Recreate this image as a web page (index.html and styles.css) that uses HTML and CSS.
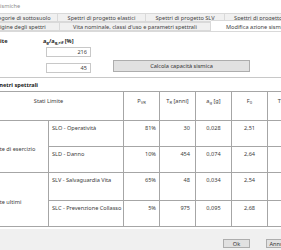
FILE: index.html
```html
<!DOCTYPE html>
<html lang="it">
<head>
  <meta charset="UTF-8" />
  <title>Azioni sismiche</title>
  <link rel="stylesheet" href="styles.css">
</head>
<body>
  <div class="window">
    <div class="titlebar">Azioni sismiche</div>

    <div class="tabs">
      <div class="tab-row row-top">
        <div class="tab w75">Categorie di sottosuolo</div>
        <div class="tab w88">Spettri di progetto elastici</div>
        <div class="tab w79">Spettri di progetto SLV</div>
        <div class="tab w79">Spettri di progetto SLD</div>
      </div>
      <div class="tab-row row-bottom">
        <div class="tab w80">Origine degli spettri</div>
        <div class="tab w151">Vita nominale, classi d'uso e parametri spettrali</div>
        <div class="tab w93 active">Modifica azione sismica</div>
      </div>
    </div>

    <div class="page">
      <div class="form">
        <div class="label">Stato limite</div>
        <div class="label">a<sub>g</sub>/a<sub>g,rif</sub> [%]</div>
        <div></div>
        <div></div>
        <input class="field" type="text" value="216">
        <div></div>
        <div></div>
        <input class="field" type="text" value="45">
        <button class="btn btn-calc">Calcola capacità sismica</button>
      </div>

      <div class="section-title">Parametri spettrali</div>

      <table class="grid">
        <thead>
          <tr>
            <th class="c-group" colspan="2">Stati Limite</th>
            <th class="c-num">P<sub>VR</sub></th>
            <th class="c-num">T<sub>R</sub> [anni]</th>
            <th class="c-num">a<sub>g</sub> [g]</th>
            <th class="c-num">F<sub>0</sub></th>
            <th class="c-last">T*<sub>C</sub> [s]</th>
          </tr>
        </thead>
        <tbody>
          <tr>
            <td class="group" rowspan="2">Stati limite di esercizio</td>
            <td class="state">SLO - Operatività</td>
            <td class="pvr">81%</td>
            <td class="tr">30</td>
            <td class="mid">0,028</td>
            <td class="mid">2,51</td>
            <td class="last">0,174</td>
          </tr>
          <tr>
            <td class="state">SLD - Danno</td>
            <td class="pvr">10%</td>
            <td class="tr">454</td>
            <td class="mid">0,074</td>
            <td class="mid">2,64</td>
            <td class="last">0,285</td>
          </tr>
          <tr class="r-slv">
            <td class="group" rowspan="2">Stati limite ultimi</td>
            <td class="state">SLV - Salvaguardia Vita</td>
            <td class="pvr">65%</td>
            <td class="tr">48</td>
            <td class="mid">0,034</td>
            <td class="mid">2,54</td>
            <td class="last">0,199</td>
          </tr>
          <tr>
            <td class="state">SLC - Prevenzione Collasso</td>
            <td class="pvr">5%</td>
            <td class="tr">975</td>
            <td class="mid">0,095</td>
            <td class="mid">2,68</td>
            <td class="last">0,302</td>
          </tr>
        </tbody>
      </table>
    </div>

    <div class="footer">
      <button class="btn btn-foot">Ok</button>
      <button class="btn btn-foot">Annulla</button>
    </div>
  </div>
</body>
</html>
```

FILE: styles.css
```css
body {
  margin: 0;
  font-family: 'Noto Sans', sans-serif;
  font-size: 5.6px;
  color: #3c3c3c;
  background: #f0f0f0;
  overflow: hidden;
}
sub {
  font-size: 0.75em;
  vertical-align: -0.2em;
  line-height: 0;
}
.window {
  width: 340px;
  margin-left: -30px;
}
.titlebar {
  height: 13px;
  line-height: 13px;
  padding-left: 10px;
  background: #fff;
  color: #8c8c8c;
}

/* schede */
.tabs {
  background: #fff;
}
.tab-row {
  display: flex;
  height: 9px;
}
.row-top {
  padding-left: 13px;
}
.row-bottom {
  padding-left: 10px;
}
.tab {
  box-sizing: border-box;
  flex: none;
  height: 9px;
  line-height: 8px;
  text-align: center;
  white-space: nowrap;
  overflow: hidden;
  background: #f0f0f0;
  border: 1px solid #d9d9d9;
  border-left: none;
  color: #444;
}
.tab.active {
  position: relative;
  z-index: 1;
  height: 11px;
  margin-top: -2px;
  line-height: 12px;
  background: #fff;
  border-bottom: none;
}
.w75 { width: 75px; }
.w79 { width: 79px; }
.w80 { width: 80px; }
.w88 { width: 88px; }
.w93 { width: 93px; }
.w151 { width: 151px; }

/* pagina */
.page {
  background: #fff;
  border-top: 1px solid #d9d9d9;
  padding-bottom: 2px;
}
.form {
  display: grid;
  grid-template-columns: 73px 48px 1fr;
  grid-template-rows: 6px 10px 12px;
  row-gap: 3px;
  align-items: center;
  padding: 6px 0 5px 0;
}
.form .label {
  font-weight: 700;
  white-space: nowrap;
  color: #222;
}
.form .label:first-child {
  padding-left: 5px;
}
.field {
  box-sizing: border-box;
  width: 45px;
  height: 10px;
  margin-left: 3px;
  padding: 0 3px;
  border: 1px solid #c8c8c8;
  font: inherit;
  color: #3c3c3c;
  text-align: right;
  background: #fff;
}
.form .field:nth-of-type(2) {
  margin-top: 3px;
}
.btn {
  box-sizing: border-box;
  font: inherit;
  color: #333;
  background: #e1e1e1;
  border: 1px solid #adadad;
  padding: 0;
}
.btn-calc {
  width: 137px;
  height: 12px;
  margin-left: 22px;
}
.section-title {
  height: 13px;
  line-height: 14px;
  padding-left: 15px;
  border-top: 1px solid #c8c8c8;
  font-weight: 700;
  color: #222;
}

/* tabella */
.grid {
  border-collapse: collapse;
  table-layout: fixed;
  width: 331px;
  margin-left: 3px;
}
.grid th,
.grid td {
  border: 1px solid #a6a6a6;
  padding: 0;
  vertical-align: top;
  white-space: nowrap;
  overflow: hidden;
  font-weight: 400;
}
.grid th {
  height: 29px;
  text-align: center;
  padding-top: 5px;
  box-sizing: border-box;
}
.c-group { width: 150px; }
.c-num { width: 36px; }
.c-last { width: 37px; }
.grid td {
  height: 26px;
  box-sizing: border-box;
  padding-top: 3px;
}
.grid .r-slv td {
  height: 28px;
}
.grid td.group {
  width: 77px;
  vertical-align: middle;
  padding: 5px 3px 0;
}
.grid td.state {
  padding-left: 3px;
}
.grid td.pvr {
  text-align: right;
  padding-right: 3px;
}
.grid td.tr {
  text-align: right;
  padding-right: 5px;
}
.grid td.mid {
  text-align: center;
}
.grid td.last {
  text-align: right;
  padding-right: 3px;
  color: transparent;
}

/* pulsanti */
.footer {
  display: flex;
  justify-content: flex-end;
  gap: 16px;
  padding: 10px 17px 0 0;
}
.btn-foot {
  width: 27px;
  height: 9px;
}
```
